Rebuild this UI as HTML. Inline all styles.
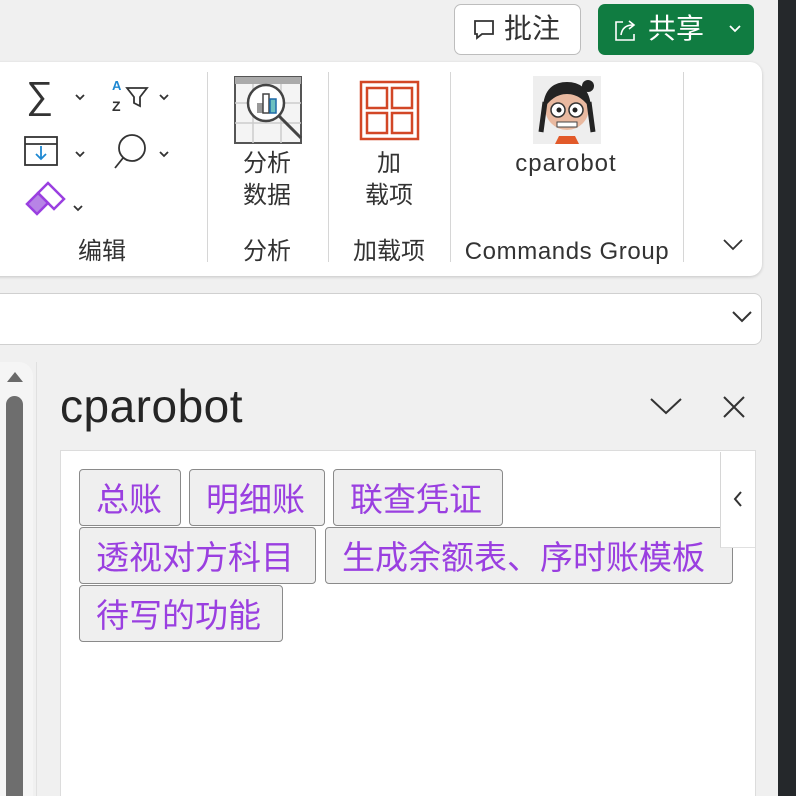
<!DOCTYPE html>
<html style="overflow:hidden;width:796px;height:796px"><head><meta charset="utf-8"><style>
*{margin:0;padding:0;box-sizing:border-box}
body{width:796px;height:796px;overflow:hidden;background:#f0f0f0;position:relative;font-family:"Liberation Sans","Noto Sans CJK SC",sans-serif;color:#262626}
.a{position:absolute}
.lbl{position:absolute;font-size:24px;color:#333;text-align:center;line-height:32px}
.sep{position:absolute;top:72px;width:1px;height:190px;background:#d6d6d6}
.btn{position:absolute;height:57px;background:#efefef;border:1px solid #8a8a8a;border-radius:4px;color:#9a3fe0;font-size:33px;line-height:55px;padding-left:16px;font-family:"Noto Sans CJK SC",sans-serif;white-space:nowrap;overflow:hidden}
</style></head><body>
<div class="a" style="left:778px;top:0;width:18px;height:796px;background:#25282b"></div>
<!-- top buttons -->
<div class="a" style="left:454px;top:4px;width:127px;height:51px;background:#fff;border:1px solid #bdbdbd;border-radius:7px"></div>
<svg class="a" style="left:472px;top:18px" width="24" height="24" viewBox="0 0 24 24"><path d="M3 3h18v13H10l-5 4v-4H3z" fill="none" stroke="#333" stroke-width="1.8"/></svg>
<div class="a" style="left:504px;top:10px;font-size:28px;line-height:38px;color:#333">批注</div>
<div class="a" style="left:598px;top:4px;width:156px;height:51px;background:#107c41;border-radius:7px"></div>
<svg class="a" style="left:613px;top:16px" width="26" height="28" viewBox="0 0 26 28"><path d="M10 6H3v18h18v-6" fill="none" stroke="#fff" stroke-width="1.6"/><path d="M8 19c1-7 5-10 12-10M16 5l5 4-5 4" fill="none" stroke="#fff" stroke-width="1.6"/></svg>
<div class="a" style="left:648px;top:10px;font-size:28px;line-height:38px;color:#fff">共享</div>
<svg class="a" style="left:728px;top:24px" width="14" height="10"><path d="M2 2l5 5 5-5" fill="none" stroke="#fff" stroke-width="1.8"/></svg>
<!-- ribbon -->
<div class="a" style="left:-20px;top:62px;width:782px;height:214px;background:#fff;border-radius:12px;box-shadow:0 1px 3px rgba(0,0,0,.18)"></div>
<div class="sep" style="left:207px"></div><div class="sep" style="left:328px"></div><div class="sep" style="left:450px"></div><div class="sep" style="left:683px"></div>
<div class="a" style="left:26px;top:74px;font-size:38px;line-height:44px;color:#333">∑</div>
<svg class="a" width="200" height="200" style="left:0;top:60px">
<g fill="none" stroke="#333" stroke-width="1.8">
<path d="M76 35l4 4 4-4M76 92l4 4 4-4M74 146l4 4 4-4M160 35l4 4 4-4M160 92l4 4 4-4"/>
<rect x="25" y="77" width="32" height="28"/><path d="M25 84h32"/>
<circle cx="132" cy="88" r="13"/><path d="M123 98l-8 10"/>
<path d="M127 28h20l-7 9v9l-6-3v-6z"/>
</g>
<path d="M41 86v13M36 94l5 5 5-5" fill="none" stroke="#1e88d2" stroke-width="1.8"/>
<text x="112" y="30" font-size="13" fill="#1e88d2" font-family="Liberation Sans" font-weight="bold">A</text>
<text x="112" y="51" font-size="14" fill="#333" font-family="Liberation Sans" font-weight="bold">Z</text>
<path d="M38 133l10-10 16 16-10 10z" fill="none" stroke="#9a3fe0" stroke-width="2.5"/>
<path d="M27 144l11-11 10 10-11 11z" fill="#b784e6" stroke="#9a3fe0" stroke-width="2.5"/>
</svg>
<div class="lbl" style="left:62px;top:236px;width:80px">编辑</div>
<svg class="a" style="left:233px;top:75px" width="70" height="70" viewBox="0 0 70 70">
<rect x="2" y="2" width="66" height="66" fill="#f4f4f4" stroke="#555" stroke-width="2"/><rect x="2" y="2" width="66" height="7" fill="#aaa"/>
<path d="M2 28h66M2 48h66M20 9v59M48 9v59" stroke="#ccc" stroke-width="1.5"/>
<circle cx="33" cy="28" r="18" fill="#fff" stroke="#444" stroke-width="2.5"/>
<path d="M46 41l22 22" stroke="#444" stroke-width="3"/>
<rect x="24" y="28" width="6" height="10" fill="#999"/><rect x="30" y="19" width="6" height="19" fill="#fff" stroke="#444" stroke-width="1.5"/><rect x="37" y="24" width="6" height="14" fill="#6cc0c0" stroke="#1e6aa8" stroke-width="1.5"/>
</svg>
<div class="lbl" style="left:227px;top:148px;width:80px">分析<br>数据</div>
<div class="lbl" style="left:227px;top:236px;width:80px">分析</div>
<svg class="a" style="left:359px;top:80px" width="61" height="61" viewBox="0 0 61 61"><g fill="none" stroke="#d24726" stroke-width="2.5"><rect x="2" y="2" width="57" height="57"/><rect x="8" y="8" width="20" height="20"/><rect x="33" y="8" width="20" height="20"/><rect x="8" y="33" width="20" height="20"/><rect x="33" y="33" width="20" height="20"/></g></svg>
<div class="lbl" style="left:349px;top:148px;width:80px">加<br>载项</div>
<div class="lbl" style="left:339px;top:236px;width:100px">加载项</div>
<svg class="a" style="left:533px;top:76px" width="68" height="68" viewBox="0 0 68 68">
<rect width="68" height="68" fill="#eee"/>
<circle cx="34" cy="32" r="22" fill="#e9b9a0"/>
<path d="M10 34c0-22 12-28 24-28s24 6 24 28c-6-10-14-16-24-16S16 24 10 34z" fill="#232323"/>
<circle cx="55" cy="10" r="6" fill="#232323"/>
<circle cx="25" cy="34" r="7" fill="#fff" stroke="#333" stroke-width="1.5"/><circle cx="43" cy="34" r="7" fill="#fff" stroke="#333" stroke-width="1.5"/>
<circle cx="26" cy="34" r="2.5" fill="#222"/><circle cx="42" cy="34" r="2.5" fill="#222"/>
<rect x="24" y="46" width="20" height="5" fill="#fff" stroke="#444"/>
<path d="M8 56l4-30M60 56l-4-30" stroke="#232323" stroke-width="5"/>
<path d="M22 68l4-8h16l4 8z" fill="#e25a2a"/>
</svg>
<div class="lbl" style="left:496px;top:148px;width:140px;letter-spacing:1px">cparobot</div>
<div class="lbl" style="left:446px;top:236px;width:242px;letter-spacing:0.6px">Commands Group</div>
<svg class="a" style="left:722px;top:238px" width="22" height="14"><path d="M2 2l9 9 9-9" fill="none" stroke="#333" stroke-width="1.8"/></svg>
<!-- formula bar -->
<div class="a" style="left:-10px;top:293px;width:772px;height:52px;background:#fff;border:1px solid #d0d0d0;border-radius:8px"></div>
<svg class="a" style="left:731px;top:310px" width="22" height="14"><path d="M2 2l9 9 9-9" fill="none" stroke="#333" stroke-width="2"/></svg>
<!-- pane -->
<div class="a" style="left:0;top:362px;width:33px;height:434px;background:#f5f5f5;border-radius:0 14px 0 0"></div>
<div class="a" style="left:36px;top:362px;width:1px;height:434px;background:#e0e0e0"></div>
<svg class="a" style="left:5px;top:370px" width="20" height="14"><path d="M10 2l8 10H2z" fill="#6a6a6a"/></svg>
<div class="a" style="left:6px;top:396px;width:17px;height:400px;background:#6e6e6e;border-radius:9px 9px 0 0"></div>
<div class="a" style="left:60px;top:376px;font-size:46px;line-height:60px;color:#252525;letter-spacing:0.5px">cparobot</div>
<svg class="a" style="left:649px;top:396px" width="34" height="20"><path d="M2 3l15 14 15-14" fill="none" stroke="#333" stroke-width="2"/></svg>
<svg class="a" style="left:721px;top:394px" width="26" height="26"><path d="M3 3l20 20M23 3L3 23" fill="none" stroke="#333" stroke-width="2"/></svg>
<div class="a" style="left:60px;top:450px;width:696px;height:346px;background:#fff;border:1px solid #dcdcdc;border-bottom:none"></div>
<div class="btn" style="left:79px;top:469px;width:102px">总账</div>
<div class="btn" style="left:189px;top:469px;width:136px">明细账</div>
<div class="btn" style="left:333px;top:469px;width:170px">联查凭证</div>
<div class="btn" style="left:79px;top:527px;width:237px">透视对方科目</div>
<div class="btn" style="left:325px;top:527px;width:408px">生成余额表、序时账模板</div>
<div class="btn" style="left:79px;top:585px;width:204px">待写的功能</div>
<div class="a" style="left:720px;top:452px;width:35px;height:96px;background:#fff;border-left:1px solid #d6d6d6;border-bottom:1px solid #e0e0e0"></div>
<svg class="a" style="left:732px;top:490px" width="12" height="18"><path d="M9 2L3 9l6 7" fill="none" stroke="#333" stroke-width="2"/></svg>
</body></html>
